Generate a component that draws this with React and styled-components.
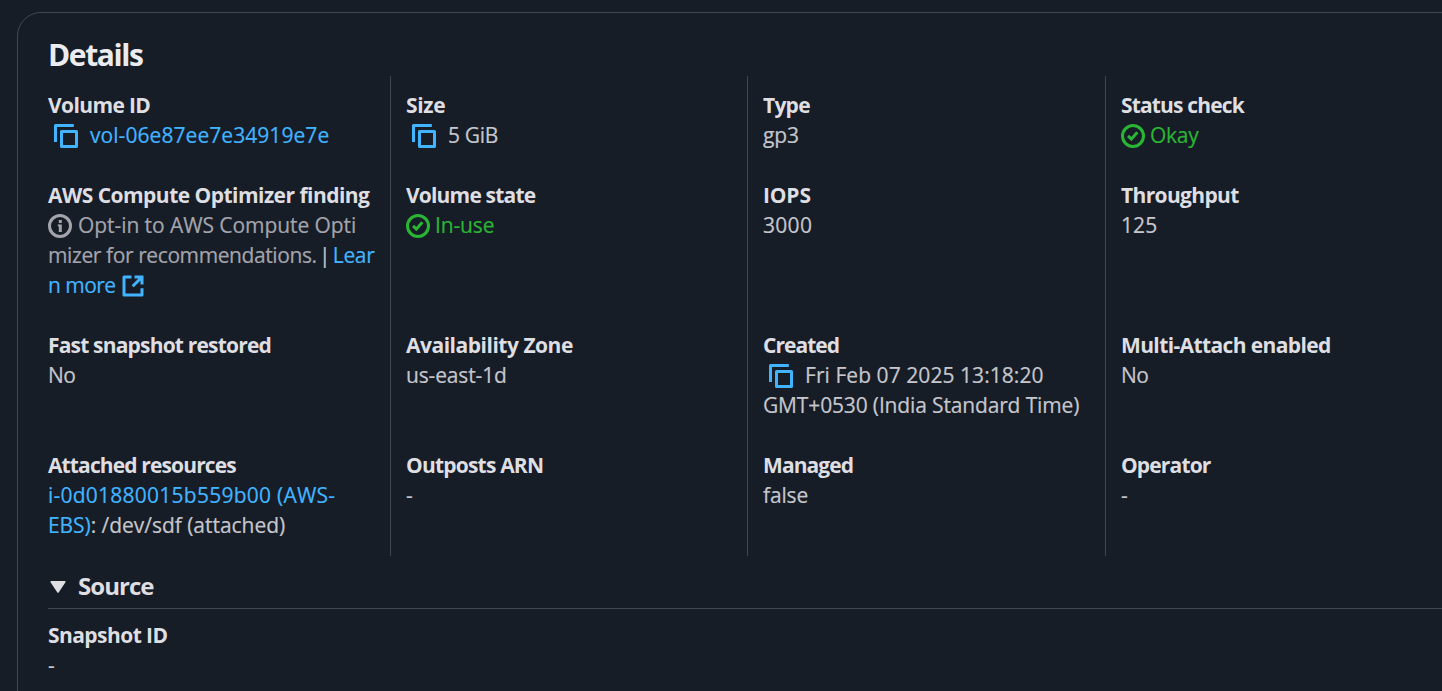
import React from "react";
import styled, { createGlobalStyle } from "styled-components";

const color = {
  page: "#161d26",
  border: "#424650",
  heading: "#ebebf0",
  label: "#dedee3",
  body: "#c6c6cd",
  muted: "#a4a4ad",
  link: "#42b4ff",
  success: "#2bb534",
};

const GlobalStyle = createGlobalStyle`
  * { box-sizing: border-box; }
  html, body { margin: 0; background: ${color.page}; overflow: hidden; }
  body { font-family: "Open Sans", "Noto Sans", sans-serif; color: ${color.body}; }
`;

const Page = styled.div`
  height: 691px;
  padding: 12px 0 0 17px;
  overflow: hidden;
`;

const Card = styled.section`
  width: 1500px;
  height: 760px;
  padding: 24px 30px 30px;
  border: 1px solid ${color.border};
  border-radius: 24px;
  font-size: 21px;
  line-height: 30px;
`;

const Heading = styled.h2`
  margin: 0 0 3px;
  font-size: 30px;
  line-height: 36px;
  font-weight: 700;
  letter-spacing: -1.4px;
  color: ${color.heading};
`;

const Columns = styled.div`
  display: grid;
  grid-template-columns: 342px 357px 358px 360px;
`;

const Column = styled.div`
  display: grid;
  grid-template-rows: 90px 150px 120px 90px;
  height: 480px;
  padding-top: 14px;

  & + & {
    padding-left: 15px;
    border-left: 1px solid ${color.border};
  }
`;

const Label = styled.div`
  font-weight: 700;
  color: ${color.label};
  letter-spacing: ${(p) => p.$track || -0.8}px;
  white-space: nowrap;
`;

const Line = styled.div`
  display: flex;
  align-items: center;
  height: 30px;
  white-space: pre;
`;

const Text = styled.span`
  color: ${(p) => color[p.$tone || "body"]};
  letter-spacing: ${(p) => p.$track || 0}px;
  -webkit-text-stroke: 0.2px;
`;

const Separator = styled(Text)`
  word-spacing: -3.2px;
`;

const Link = styled.a`
  color: ${color.link};
  text-decoration: none;
  letter-spacing: ${(p) => p.$track || 0}px;
  -webkit-text-stroke: 0.2px;
`;

const Icon = styled.svg`
  flex: none;
  width: 24px;
  height: 24px;
  fill: none;
  stroke: ${(p) => color[p.$tone]};
  stroke-width: 2;
  margin: ${(p) => p.$margin || "0"};
`;

const SectionHeader = styled.div`
  display: flex;
  align-items: center;
  gap: 10px;
  height: 38px;
  margin-top: 15px;
  padding-bottom: 7px;
  border-bottom: 1px solid ${color.border};
`;

const SectionTitle = styled.h3`
  margin: 0;
  font-size: 24px;
  line-height: 30px;
  letter-spacing: -0.95px;
  color: ${color.label};
`;

const Caret = styled.svg`
  width: 20px;
  height: 20px;
  fill: ${color.label};
  stroke: ${color.label};
  stroke-width: 1.6;
  stroke-linejoin: round;
`;

const SectionBody = styled.div`
  padding-top: 11px;
`;

const CopyIcon = () => (
  <Icon viewBox="0 0 16 16" $tone="link" $margin="2px 12px 0 6px">
    <path d="M1 12V1h12.2" strokeLinejoin="round" />
    <path d="M5 5h10v10H5z" strokeLinejoin="round" />
  </Icon>
);

const CheckIcon = () => (
  <Icon viewBox="0 0 16 16" $tone="success" $margin="2px 5px 0 0">
    <circle cx="8" cy="8" r="7" />
    <path d="m4.7 7.9 2.2 2.2 4-4.6" />
  </Icon>
);

const InfoIcon = () => (
  <Icon viewBox="0 0 16 16" $tone="muted" $margin="2px 6px 0 0">
    <circle cx="8" cy="8" r="7" />
    <path d="M8.2 12V7M8.2 6V4" />
    <path d="M6.5 7.6h1.2" strokeWidth="1.2" />
  </Icon>
);

const ExternalIcon = () => (
  <Icon viewBox="0 0 16 16" $tone="link" $margin="2px 0 0 5px">
    <path d="M7 2H2v12h12V9.5" strokeLinejoin="round" />
    <path d="M9 2h5v5M7.8 8.2 13.7 2.3" />
  </Icon>
);

const Field = ({ label, track, children }) => (
  <div>
    <Label $track={track}>{label}</Label>
    {children}
  </div>
);

const Value = ({ track, children }) => (
  <Line>
    <Text $track={track}>{children}</Text>
  </Line>
);

export default function App() {
  return (
    <Page>
      <GlobalStyle />
      <Card>
        <Heading>Details</Heading>
        <Columns>
          <Column>
            <Field label="Volume ID" track={-0.62}>
              <Line>
                <CopyIcon />
                <Link $track={0.06}>vol-06e87ee7e34919e7e</Link>
              </Line>
            </Field>
            <Field label="AWS Compute Optimizer finding" track={-0.53}>
              <Line>
                <InfoIcon />
                <Text $tone="muted" $track={-0.07}>Opt-in to AWS Compute Opti</Text>
              </Line>
              <Line>
                <Text $tone="muted" $track={-0.4}>mizer for recommendations.</Text>
                <Separator> | </Separator>
                <Link $track={-0.34}>Lear</Link>
              </Line>
              <Line>
                <Link $track={-0.54}>n more</Link>
                <ExternalIcon />
              </Line>
            </Field>
            <Field label="Fast snapshot restored" track={-0.82}>
              <Value track={-0.5}>No</Value>
            </Field>
            <Field label="Attached resources" track={-0.87}>
              <Line>
                <Link $track={0.24}>i-0d01880015b559b00 (AWS-</Link>
              </Line>
              <Line>
                <Link $track={-0.08}>EBS)</Link>
                <Text $track={-0.03}>: /dev/sdf (attached)</Text>
              </Line>
            </Field>
          </Column>
          <Column>
            <Field label="Size" track={-0.31}>
              <Line>
                <CopyIcon />
                <Text $track={-0.3}>5 GiB</Text>
              </Line>
            </Field>
            <Field label="Volume state" track={-0.82}>
              <Line>
                <CheckIcon />
                <Text $tone="success" $track={-0.15}>In-use</Text>
              </Line>
            </Field>
            <Field label="Availability Zone" track={-0.48}>
              <Value track={-0.15}>us-east-1d</Value>
            </Field>
            <Field label="Outposts ARN" track={-0.8}>
              <Value>-</Value>
            </Field>
          </Column>
          <Column>
            <Field label="Type" track={-0.75}>
              <Value track={-0.13}>gp3</Value>
            </Field>
            <Field label="IOPS" track={-0.15}>
              <Value track={0.3}>3000</Value>
            </Field>
            <Field label="Created" track={-0.97}>
              <Line>
                <CopyIcon />
                <Text $track={0.06}>Fri Feb 07 2025 13:18:20</Text>
              </Line>
              <Value track={-0.15}>GMT+0530 (India Standard Time)</Value>
            </Field>
            <Field label="Managed" track={-0.92}>
              <Value track={-0.15}>false</Value>
            </Field>
          </Column>
          <Column>
            <Field label="Status check" track={-0.85}>
              <Line>
                <CheckIcon />
                <Text $tone="success" $track={-0.3}>Okay</Text>
              </Line>
            </Field>
            <Field label="Throughput" track={-0.65}>
              <Value track={0.1}>125</Value>
            </Field>
            <Field label="Multi-Attach enabled" track={-0.62}>
              <Value track={-0.5}>No</Value>
            </Field>
            <Field label="Operator" track={-0.85}>
              <Value>-</Value>
            </Field>
          </Column>
        </Columns>
        <SectionHeader>
          <Caret viewBox="0 0 20 20">
            <path d="M3.2 5.8h13.6L10 16z" />
          </Caret>
          <SectionTitle>Source</SectionTitle>
        </SectionHeader>
        <SectionBody>
          <Field label="Snapshot ID" track={-0.56}>
            <Value>-</Value>
          </Field>
        </SectionBody>
      </Card>
    </Page>
  );
}
